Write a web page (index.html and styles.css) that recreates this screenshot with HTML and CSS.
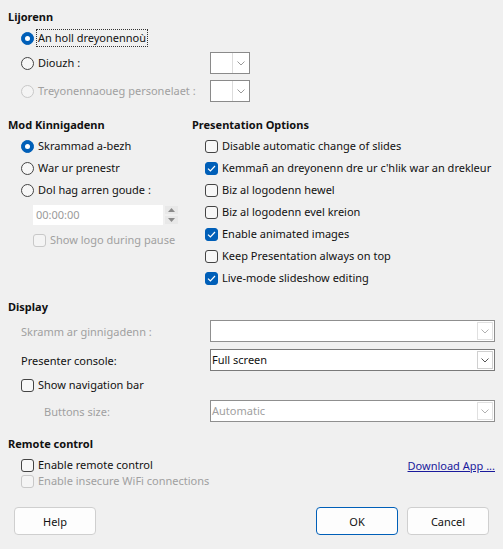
FILE: index.html
```html
<!DOCTYPE html>
<html>
<head>
<meta charset="utf-8">
<link rel="stylesheet" href="styles.css">
</head>
<body>
<div class="dlg">
  <section class="sec-lij">
    <h3>Lijorenn</h3>
    <div class="opt r-first"><span class="radio on"></span><span class="focus">An holl dreyonennoù</span></div>
    <div class="frow">
      <div class="opt"><span class="radio"></span><span>Diouzh :</span></div>
      <div class="combo small"><span class="cbtn"><svg width="8" height="5" viewBox="0 0 8 5"><path d="M0.5 0.5 L4 4 L7.5 0.5" fill="none" stroke="#9a9a9a" stroke-width="1"/></svg></span></div>
    </div>
    <div class="frow">
      <div class="opt dis"><span class="radio"></span><span>Treyonennaoueg personelaet :</span></div>
      <div class="combo small"><span class="cbtn"><svg width="8" height="5" viewBox="0 0 8 5"><path d="M0.5 0.5 L4 4 L7.5 0.5" fill="none" stroke="#9a9a9a" stroke-width="1"/></svg></span></div>
    </div>
  </section>

  <section class="cols">
    <div class="col-left">
      <h3>Mod Kinnigadenn</h3>
      <div class="list">
        <div class="opt tall"><span class="radio on"></span><span>Skrammad a-bezh</span></div>
        <div class="opt tall"><span class="radio"></span><span>War ur prenestr</span></div>
        <div class="opt tall"><span class="radio"></span><span>Dol hag arren goude :</span></div>
      </div>
      <div class="spin">
        <div class="spin-field">00:00:00</div>
        <div class="spin-btns">
          <span class="sb"><svg width="7" height="4" viewBox="0 0 7 4"><path d="M3.5 0 L7 4 L0 4 Z" fill="#8a8a8a"/></svg></span>
          <span class="sb"><svg width="7" height="4" viewBox="0 0 7 4"><path d="M0 0 L7 0 L3.5 4 Z" fill="#8a8a8a"/></svg></span>
        </div>
      </div>
      <div class="opt dis logo"><span class="check"></span><span>Show logo during pause</span></div>
    </div>
    <div class="col-right">
      <h3>Presentation Options</h3>
      <div class="list">
        <div class="opt tall"><span class="check"></span><span>Disable automatic change of slides</span></div>
        <div class="opt tall"><span class="check on"><svg width="9" height="7" viewBox="0 0 9 7"><path d="M1 3.6 L3.4 6 L8 1" fill="none" stroke="#fff" stroke-width="1.2"/></svg></span><span>Kemmañ an dreyonenn dre ur c'hlik war an drekleur</span></div>
        <div class="opt tall"><span class="check"></span><span>Biz al logodenn hewel</span></div>
        <div class="opt tall"><span class="check"></span><span>Biz al logodenn evel kreion</span></div>
        <div class="opt tall"><span class="check on"><svg width="9" height="7" viewBox="0 0 9 7"><path d="M1 3.6 L3.4 6 L8 1" fill="none" stroke="#fff" stroke-width="1.2"/></svg></span><span>Enable animated images</span></div>
        <div class="opt tall"><span class="check"></span><span>Keep Presentation always on top</span></div>
        <div class="opt tall"><span class="check on"><svg width="9" height="7" viewBox="0 0 9 7"><path d="M1 3.6 L3.4 6 L8 1" fill="none" stroke="#fff" stroke-width="1.2"/></svg></span><span>Live-mode slideshow editing</span></div>
      </div>
    </div>
  </section>

  <section class="sec-disp">
    <h3>Display</h3>
    <div class="drow d1">
      <span class="dlabel dis">Skramm ar ginnigadenn :</span>
      <div class="combo wide dcombo"><span class="cval"></span><span class="cbtn"><svg width="8" height="5" viewBox="0 0 8 5"><path d="M0.5 0.5 L4 4 L7.5 0.5" fill="none" stroke="#b0b0b0" stroke-width="1"/></svg></span></div>
    </div>
    <div class="drow d2">
      <span class="dlabel">Presenter console:</span>
      <div class="combo wide"><span class="cval">Full screen</span><span class="cbtn"><svg width="8" height="5" viewBox="0 0 8 5"><path d="M0.5 0.5 L4 4 L7.5 0.5" fill="none" stroke="#555" stroke-width="1"/></svg></span></div>
    </div>
    <div class="opt navbar"><span class="check"></span><span>Show navigation bar</span></div>
    <div class="drow d3">
      <span class="dlabel sub dis">Buttons size:</span>
      <div class="combo wide dcombo"><span class="cval">Automatic</span><span class="cbtn"><svg width="8" height="5" viewBox="0 0 8 5"><path d="M0.5 0.5 L4 4 L7.5 0.5" fill="none" stroke="#b0b0b0" stroke-width="1"/></svg></span></div>
    </div>
  </section>

  <section class="sec-remote">
    <h3>Remote control</h3>
    <div class="rrow">
      <div class="opt"><span class="check"></span><span>Enable remote control</span></div>
      <a class="link">Download App ...</a>
    </div>
    <div class="opt dis"><span class="check"></span><span>Enable insecure WiFi connections</span></div>
  </section>

  <div class="btnrow">
    <button class="btn">Help</button>
    <div class="btn-right">
      <button class="btn def">OK</button>
      <button class="btn">Cancel</button>
    </div>
  </div>
</div>
</body>
</html>
```

FILE: styles.css
```css
* { box-sizing: border-box; }
html, body { margin: 0; padding: 0; }
body {
  width: 503px;
  height: 549px;
  overflow: hidden;
  background: #f0f0f0;
  font-family: "Noto Sans", "Open Sans", sans-serif;
  font-size: 11px;
  color: #111;
}
.dlg { padding: 9px 8px 0 8px; }
h3 {
  margin: 0;
  font-size: 11px;
  font-weight: 700;
  line-height: 16px;
  height: 16px;
}

.opt {
  display: flex;
  align-items: center;
  gap: 4px;
  height: 16px;
  line-height: 16px;
  margin-left: 13px;
  white-space: nowrap;
}
.opt.tall { height: 22px; }
.dis { color: #a0a0a0; }

.radio {
  width: 13px; height: 13px;
  border-radius: 50%;
  border: 1px solid #444;
  background: #f7f7f7;
  flex: none;
  position: relative;
}
.radio.on { background: #005fb8; border-color: #005fb8; }
.radio.on::after {
  content: "";
  position: absolute;
  left: 3px; top: 3px;
  width: 5px; height: 5px;
  border-radius: 50%;
  background: #fff;
}
.dis .radio { border-color: #c8c8c8; background: #f4f4f4; }

.check {
  width: 13px; height: 13px;
  border-radius: 3px;
  border: 1px solid #444;
  background: #f7f7f7;
  flex: none;
  display: flex;
  align-items: center;
  justify-content: center;
}
.check.on { background: #005fb8; border-color: #005fb8; }
.dis .check { border-color: #c8c8c8; background: #f4f4f4; }

.focus { outline: 1px dotted #333; outline-offset: 0; padding: 0 1px; margin-left: -1px; }

.r-first { margin-top: 5px; }
.frow {
  display: grid;
  grid-template-columns: 202px 40px;
  align-items: center;
  margin-top: 6px;
  height: 22px;
}

.combo {
  height: 22px;
  border: 1px solid #7a7a7a;
  background: #fff;
  display: flex;
  align-items: stretch;
}
.combo.small { width: 40px; border-color: #8a8a8a; justify-content: flex-end; }
.combo.small .cbtn { width: 17px; border-left: 1px solid #dcdcdc; }
.cbtn {
  width: 17px;
  flex: none;
  display: flex;
  align-items: center;
  justify-content: center;
  background: #fff;
}
.combo.wide { width: 285px; }
.combo.wide .cbtn { border: 1px solid #d0d0d0; margin: 1px; width: 16px; }
.cval { flex: 1; padding-left: 1px; line-height: 20px; color: #111; }
.dcombo { border-color: #8f8f8f; }
.dcombo .cval { color: #a0a0a0; }
.dcombo .cbtn { border-color: #e0e0e0 !important; }

.cols {
  display: grid;
  grid-template-columns: 184px 1fr;
  margin-top: 15px;
}
.list { margin-top: 2px; }
.spin {
  display: flex;
  margin-left: 25px;
  margin-top: 4px;
  height: 20px;
}
.spin-field {
  width: 130px;
  background: #fff;
  color: #9a9a9a;
  line-height: 20px;
  padding-left: 3px;
}
.spin-btns { display: flex; flex-direction: column; margin-left: 1px; }
.sb {
  width: 15px; height: 10px;
  background: #e8e8e8;
  border: 1px solid #f0f0f0;
  display: flex; align-items: center; justify-content: center;
}
.opt.logo { margin-left: 25px; margin-top: 7px; }

.sec-disp { margin-top: 10px; }
.drow {
  display: grid;
  grid-template-columns: 202px 285px;
  align-items: center;
}
.d1 { margin-top: 5px; }
.d2 { margin-top: 7px; }
.d3 { margin-top: 7px; }
.dlabel { padding-left: 13px; }
.dlabel.sub { padding-left: 36px; }
.opt.navbar { margin-top: 6px; }

.sec-remote { margin-top: 14px; }
.rrow {
  display: flex;
  justify-content: space-between;
  align-items: center;
  margin-top: 5px;
  height: 16px;
}
.link { color: #1a1a9c; text-decoration: underline; }

.btnrow {
  display: flex;
  justify-content: space-between;
  margin: 18px 6px 0 6px;
}
.btn-right { display: flex; gap: 9px; }
.btn {
  width: 82px;
  height: 28px;
  border: 1px solid #cfcfcf;
  border-radius: 4px;
  background: #fdfdfd;
  font-family: inherit;
  font-size: 11px;
  color: #111;
  padding: 0;
}
.btn.def { border-color: #005fb8; }
```
